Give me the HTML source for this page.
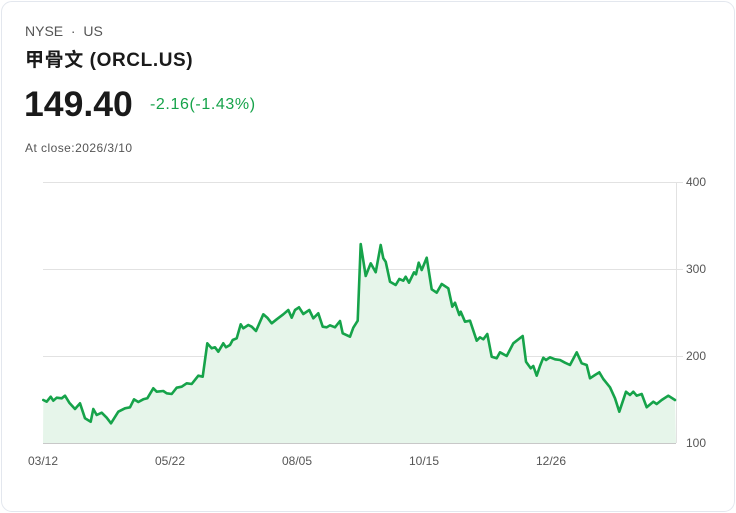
<!DOCTYPE html>
<html><head><meta charset="utf-8"><style>
html,body{margin:0;padding:0;background:#fff;width:736px;height:513px;overflow:hidden}
.card{position:absolute;left:1px;top:1px;width:732px;height:509px;border:1px solid #e3e7ee;border-radius:11px;background:#fff}
.t{position:absolute;font-family:"Liberation Sans","Noto Sans CJK SC",sans-serif;white-space:nowrap}
</style></head><body>
<div class="card"></div>
<div class="t" style="left:25px;top:23px;font-size:14px;color:#555">NYSE &nbsp;·&nbsp; US</div>
<div class="t" style="left:25px;top:45px;font-size:19px;font-weight:bold;color:#1a1a1a;letter-spacing:0.6px">甲骨文 (ORCL.US)</div>
<div class="t" style="left:24px;top:84px;font-size:35.6px;font-weight:bold;color:#1a1a1a">149.40</div>
<div class="t" style="left:150px;top:96px;font-size:16px;color:#16a34a;letter-spacing:0.6px">-2.16(-1.43%)</div>
<div class="t" style="left:25px;top:141px;font-size:12px;color:#555;letter-spacing:0.45px">At close:2026/3/10</div>
<svg width="736" height="513" style="position:absolute;left:0;top:0">
<g stroke="#e2e2e2" stroke-width="1">
<line x1="43" y1="182.5" x2="683" y2="182.5"/>
<line x1="43" y1="269.5" x2="683" y2="269.5"/>
<line x1="43" y1="356.5" x2="683" y2="356.5"/>
<line x1="676.5" y1="182" x2="676.5" y2="443"/>
</g>
<path fill="#e6f5ea" d="M43.3,400 L46.7,401.7 50.7,396.7 53.3,400.7 56.7,397.7 61.7,398.3 65,395.7 69.3,402.7 75,409 80,403.3 85,418.3 90.7,421.7 93.3,409 96.7,415 101.7,412.7 106.7,417.7 111,423.3 118.3,411.7 125,408.3 130,407.3 134,399.3 138.3,402 143.3,399.3 147.3,398.3 153.3,388.3 156.7,391.7 163.3,391 166.7,393.3 171.7,394 176.7,387.7 181.7,386.7 186.7,383.3 191.7,384 198.3,375.7 202.7,376.7 207.3,343.3 211.7,348.3 215,347.3 218.3,351.7 223.3,343.3 226,347.3 230,345 232.7,340 236.7,338.3 240.7,324.3 243.3,328.3 248.3,325 251.7,326.7 256,331 263.3,314.3 267.3,317.7 271.7,323.3 276.7,319.3 283.3,314.3 288.3,310 291.7,317.7 295,310 299,307.3 303.3,314 309.3,310 313.3,318.3 318.3,313.3 322.7,326.7 326.7,327.3 330,325.3 335,327.3 340,321 342.7,333.3 350,336.7 353.3,327.7 357.7,320.7 360.7,244 365.7,276 370.7,263.3 375.7,272.3 380.7,245 383.3,258.3 385.7,261.7 390,281.7 395.7,285 399.3,279 403.3,280.7 405.7,276.7 409,282.7 414,272.3 416,274.3 418.7,262.7 421.7,270 426.7,257.7 431.7,289.3 436.7,292.7 441.7,284 448.3,288.3 452.3,306.7 455,302.7 459.3,315 460.7,311.7 465,321.7 470,320.7 476.7,340.7 480,337.3 483.3,339.3 487.3,334 491.7,356.7 496.7,358.3 500,352.3 506.7,356 513.3,343.3 522.7,336 526,361.7 530.7,368.3 533.3,366 536.7,375.7 540,366 543.3,357.7 546,360 550,357.3 555,359.3 560,360 565,362.7 570,365 576.7,352.3 581.7,363.3 586.7,365 590,378.3 595,375 599.3,372.3 603.3,379 610,387.3 615,398.3 619.3,411.7 626,391.7 630,395 633.3,391.7 636.7,395.7 641.7,394 646.7,407.3 653.3,401.7 656.7,404 661.7,400 668.3,395.7 675,400 L676,443 L43,443 Z"/>
<line x1="43" y1="443.5" x2="676" y2="443.5" stroke="#c8c8c8" stroke-width="1"/>
<path fill="none" stroke="#16a34a" stroke-width="2.6" stroke-linejoin="round" stroke-linecap="round" d="M43.3,400 L46.7,401.7 50.7,396.7 53.3,400.7 56.7,397.7 61.7,398.3 65,395.7 69.3,402.7 75,409 80,403.3 85,418.3 90.7,421.7 93.3,409 96.7,415 101.7,412.7 106.7,417.7 111,423.3 118.3,411.7 125,408.3 130,407.3 134,399.3 138.3,402 143.3,399.3 147.3,398.3 153.3,388.3 156.7,391.7 163.3,391 166.7,393.3 171.7,394 176.7,387.7 181.7,386.7 186.7,383.3 191.7,384 198.3,375.7 202.7,376.7 207.3,343.3 211.7,348.3 215,347.3 218.3,351.7 223.3,343.3 226,347.3 230,345 232.7,340 236.7,338.3 240.7,324.3 243.3,328.3 248.3,325 251.7,326.7 256,331 263.3,314.3 267.3,317.7 271.7,323.3 276.7,319.3 283.3,314.3 288.3,310 291.7,317.7 295,310 299,307.3 303.3,314 309.3,310 313.3,318.3 318.3,313.3 322.7,326.7 326.7,327.3 330,325.3 335,327.3 340,321 342.7,333.3 350,336.7 353.3,327.7 357.7,320.7 360.7,244 365.7,276 370.7,263.3 375.7,272.3 380.7,245 383.3,258.3 385.7,261.7 390,281.7 395.7,285 399.3,279 403.3,280.7 405.7,276.7 409,282.7 414,272.3 416,274.3 418.7,262.7 421.7,270 426.7,257.7 431.7,289.3 436.7,292.7 441.7,284 448.3,288.3 452.3,306.7 455,302.7 459.3,315 460.7,311.7 465,321.7 470,320.7 476.7,340.7 480,337.3 483.3,339.3 487.3,334 491.7,356.7 496.7,358.3 500,352.3 506.7,356 513.3,343.3 522.7,336 526,361.7 530.7,368.3 533.3,366 536.7,375.7 540,366 543.3,357.7 546,360 550,357.3 555,359.3 560,360 565,362.7 570,365 576.7,352.3 581.7,363.3 586.7,365 590,378.3 595,375 599.3,372.3 603.3,379 610,387.3 615,398.3 619.3,411.7 626,391.7 630,395 633.3,391.7 636.7,395.7 641.7,394 646.7,407.3 653.3,401.7 656.7,404 661.7,400 668.3,395.7 675,400"/>
<g font-family="Liberation Sans, sans-serif" font-size="12" fill="#555">
<text x="686" y="186">400</text>
<text x="686" y="273">300</text>
<text x="686" y="360">200</text>
<text x="686" y="447">100</text>
<text x="28" y="465">03/12</text>
<text x="155" y="465">05/22</text>
<text x="282" y="465">08/05</text>
<text x="409" y="465">10/15</text>
<text x="536" y="465">12/26</text>
</g>
</svg>
</body></html>
